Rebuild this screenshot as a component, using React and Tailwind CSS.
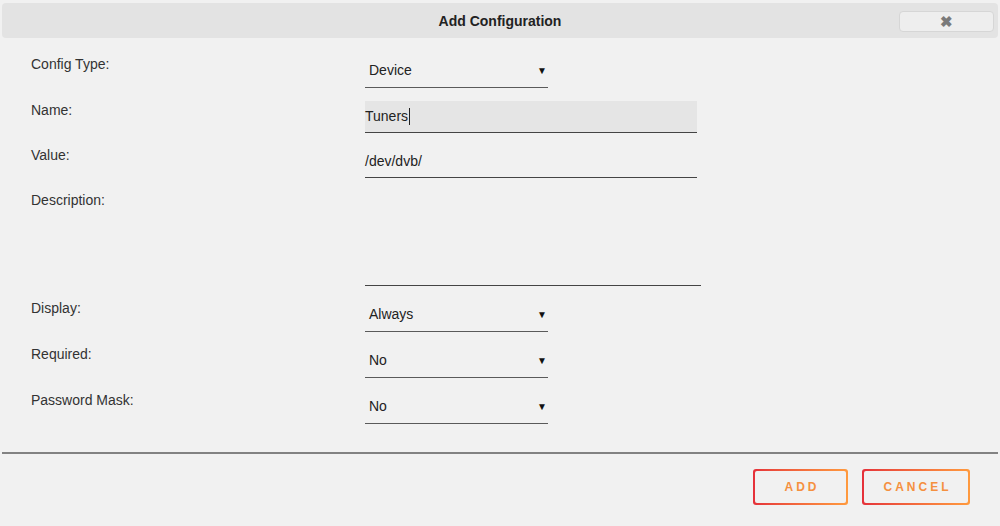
import React from "react";

const font = { fontFamily: '"Liberation Sans", Arial, sans-serif' };

function Label({ children }) {
  return (
    <div className="w-[365px] shrink-0 pl-[31px] text-[14px] leading-[20px] text-[#333]">
      {children}
    </div>
  );
}

function Select({ value }) {
  return (
    <div className="flex h-[34px] w-[183px] items-center justify-between border-b border-[#5a5a5a] pl-[4px] pr-[1px] text-[14px] text-[#222]">
      <span>{value}</span>
      <span className="text-[10px] leading-none text-[#111]">▼</span>
    </div>
  );
}

export default function App() {
  return (
    <div style={font} className="flex h-[526px] w-[1000px] flex-col bg-[#f1f1f1] text-[#222]">
      {/* title bar */}
      <div className="px-[2px] pt-[3px]">
        <div className="relative flex h-[35px] items-center justify-center rounded-[4px] bg-[#e3e3e3]">
          <span className="pt-[2px] text-[14px] font-bold text-[#222]">Add Configuration</span>
          <div className="absolute right-[4px] top-[8px] flex h-[21px] w-[95px] items-center justify-center rounded-[4px] border border-[#d6d6d6] bg-[#eeeeee] text-[15px] font-bold leading-none text-[#7a7a7a]">
            ✖
          </div>
        </div>
      </div>

      {/* form rows */}
      <div className="mt-[16px] flex flex-col gap-[12px]">
        <div className="flex">
          <Label>Config Type:</Label>
          <Select value="Device" />
        </div>

        <div className="flex">
          <Label>Name:</Label>
          <div className="mt-[1px] flex h-[32px] w-[332px] items-center border-b border-[#444] bg-[#e5e5e5] text-[14px] text-[#222]">
            Tuners
            <span className="ml-[1px] inline-block h-[17px] w-[1px] bg-[#222]" />
          </div>
        </div>

        <div className="flex">
          <Label>Value:</Label>
          <div className="flex h-[33px] w-[332px] items-center border-b border-[#444] text-[14px] text-[#222]">
            /dev/dvb/
          </div>
        </div>

        <div className="flex">
          <Label>Description:</Label>
          <div className="h-[96px] w-[336px] border-b border-[#444]" />
        </div>

        <div className="flex">
          <Label>Display:</Label>
          <Select value="Always" />
        </div>

        <div className="flex">
          <Label>Required:</Label>
          <Select value="No" />
        </div>

        <div className="flex">
          <Label>Password Mask:</Label>
          <Select value="No" />
        </div>
      </div>

      {/* divider */}
      <div className="mx-[2px] mt-[28px] h-[2px] bg-[#828282]" />

      {/* actions */}
      <div className="mt-[15px] flex justify-end gap-[14px] pr-[30px]">
        <div className="rounded-[3px] bg-gradient-to-r from-[#e5303a] to-[#ff9a3e] p-[2px]">
          <div className="flex h-[32px] w-[91px] items-center justify-center rounded-[2px] bg-[#f1f1f1] pl-[3px] text-[12px] font-bold tracking-[3px] text-[#f5903f]">
            ADD
          </div>
        </div>
        <div className="rounded-[3px] bg-gradient-to-r from-[#e5303a] to-[#ff9a3e] p-[2px]">
          <div className="flex h-[32px] w-[104px] items-center justify-center rounded-[2px] bg-[#f1f1f1] pl-[3px] text-[12px] font-bold tracking-[3px] text-[#f5903f]">
            CANCEL
          </div>
        </div>
      </div>
    </div>
  );
}
